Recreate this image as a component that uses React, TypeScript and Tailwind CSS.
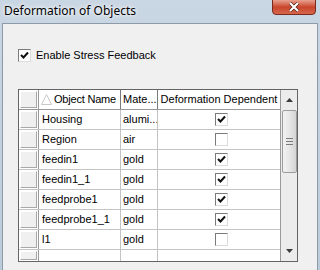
import React from 'react';

const rows = [
  { name: 'Housing', mat: 'alumi...', dep: true },
  { name: 'Region', mat: 'air', dep: false },
  { name: 'feedin1', mat: 'gold', dep: true },
  { name: 'feedin1_1', mat: 'gold', dep: true },
  { name: 'feedprobe1', mat: 'gold', dep: true },
  { name: 'feedprobe1_1', mat: 'gold', dep: true },
  { name: 'l1', mat: 'gold', dep: false },
];

function Check({ checked }: { checked: boolean }) {
  return (
    <div className="w-[13px] h-[13px] shrink-0 bg-white border border-t-[#7a7a7a] border-l-[#7a7a7a] border-r-[#dcdcdc] border-b-[#dcdcdc] flex items-center justify-center">
      {checked && (
        <svg width="9" height="9" viewBox="0 0 9 9">
          <path d="M1 4 L3.5 6.5 L8 1.5" stroke="#111" strokeWidth="2" fill="none" />
        </svg>
      )}
    </div>
  );
}

function RowHead() {
  return (
    <div className="w-[20px] h-full shrink-0 border-r border-[#9a9a9a] p-px">
      <div className="w-full h-full bg-[#f0f0f0] border border-t-white border-l-white border-r-[#a8a8a8] border-b-[#a8a8a8]" />
    </div>
  );
}

export default function App() {
  return (
    <div
      className="w-[320px] h-[270px] bg-gradient-to-b from-[#c9d6e3] to-[#bccbda] flex flex-col overflow-hidden"
      style={{ fontFamily: '"Liberation Sans", Arial, sans-serif' }}
    >
      {/* Title bar */}
      <div className="h-[23px] flex items-start justify-between shrink-0">
        <span className="pl-1 pt-[2px] text-[12px] text-black" style={{ fontFamily: '"Noto Sans", sans-serif', textShadow: '0 0 6px #fff, 0 0 3px #fff' }}>
          Deformation of Objects
        </span>
        <div className="mr-[4px] w-[44px] h-[16px] -mt-px rounded-b-[4px] border border-[#7a2a1c] bg-gradient-to-b from-[#e8a08f] via-[#c9452b] to-[#d5664c] flex items-center justify-center">
          <svg width="12" height="10" viewBox="0 0 12 10">
            <path d="M2 1 L10 9 M10 1 L2 9" stroke="#4a1a10" strokeWidth="3.4" />
            <path d="M2 1 L10 9 M10 1 L2 9" stroke="#fff" strokeWidth="2.2" />
          </svg>
        </div>
      </div>

      {/* Body */}
      <div className="flex-1 ml-[2px] mr-[2px] border border-[#8e9aa7] bg-[#f0f0f0] border-b-0">
        <div className="pl-[15px] pt-[23px] flex items-center gap-[5px] text-[11px] text-black">
          <Check checked />
          <span>Enable Stress Feedback</span>
        </div>

        <div className="mt-[25px] ml-[15px] w-[280px] h-[173px] border border-[#646464] bg-white flex text-[11px] text-black whitespace-nowrap">
          <div className="w-[261px] flex flex-col">
            {/* Header */}
            <div className="h-[20px] flex border-b border-[#9a9a9a] shrink-0">
              <RowHead />
              <div className="w-[82px] border-r border-[#7a7a7a] bg-white flex items-center pl-[2px] gap-[2px] overflow-hidden tracking-[-0.2px]">
                <svg width="11" height="11" viewBox="0 0 11 11" className="shrink-0">
                  <path d="M5.5 0.5 L10.5 10.5 L0.5 10.5 Z" fill="none" stroke="#c8c8c8" />
                </svg>
                <span>Object Name</span>
              </div>
              <div className="w-[37px] border-r border-[#7a7a7a] flex items-center pl-[2px] bg-white overflow-hidden">Mate...</div>
              <div className="flex-1 flex items-center justify-center bg-white">Deformation Dependent</div>
            </div>
            {rows.map((r) => (
              <div key={r.name} className="h-[20px] flex border-b border-[#c4c4c4] shrink-0">
                <RowHead />
                <div className="w-[82px] border-r border-[#c4c4c4] flex items-center pl-[3px] overflow-hidden">{r.name}</div>
                <div className="w-[37px] border-r border-[#c4c4c4] flex items-center pl-[2px] overflow-hidden">{r.mat}</div>
                <div className="flex-1 flex items-center justify-center pl-[4px]">
                  <Check checked={r.dep} />
                </div>
              </div>
            ))}
            <div className="flex-1 flex">
              <RowHead />
              <div className="w-[82px] border-r border-[#c4c4c4]" />
              <div className="w-[37px] border-r border-[#c4c4c4]" />
              <div className="flex-1" />
            </div>
          </div>

          {/* Scrollbar */}
          <div className="w-[17px] border-l border-[#9a9a9a] bg-[#ececec] flex flex-col items-center">
            <div className="h-[20px] flex items-center justify-center">
              <svg width="7" height="4" viewBox="0 0 7 4"><path d="M3.5 0 L7 4 L0 4 Z" fill="#3c3c3c" /></svg>
            </div>
            <div className="w-[15px] h-[63px] rounded-[2px] border border-[#9c9c9c] bg-gradient-to-r from-[#f2f2f2] via-[#e6e6e6] to-[#d4d4d4] flex flex-col items-center justify-center gap-[2px]">
              <div className="w-[7px] h-px bg-[#7a7a7a]" />
              <div className="w-[7px] h-px bg-[#7a7a7a]" />
              <div className="w-[7px] h-px bg-[#7a7a7a]" />
            </div>
            <div className="flex-1" />
            <div className="h-[20px] flex items-center justify-center">
              <svg width="7" height="4" viewBox="0 0 7 4"><path d="M0 0 L7 0 L3.5 4 Z" fill="#3c3c3c" /></svg>
            </div>
          </div>
        </div>
      </div>
    </div>
  );
}
